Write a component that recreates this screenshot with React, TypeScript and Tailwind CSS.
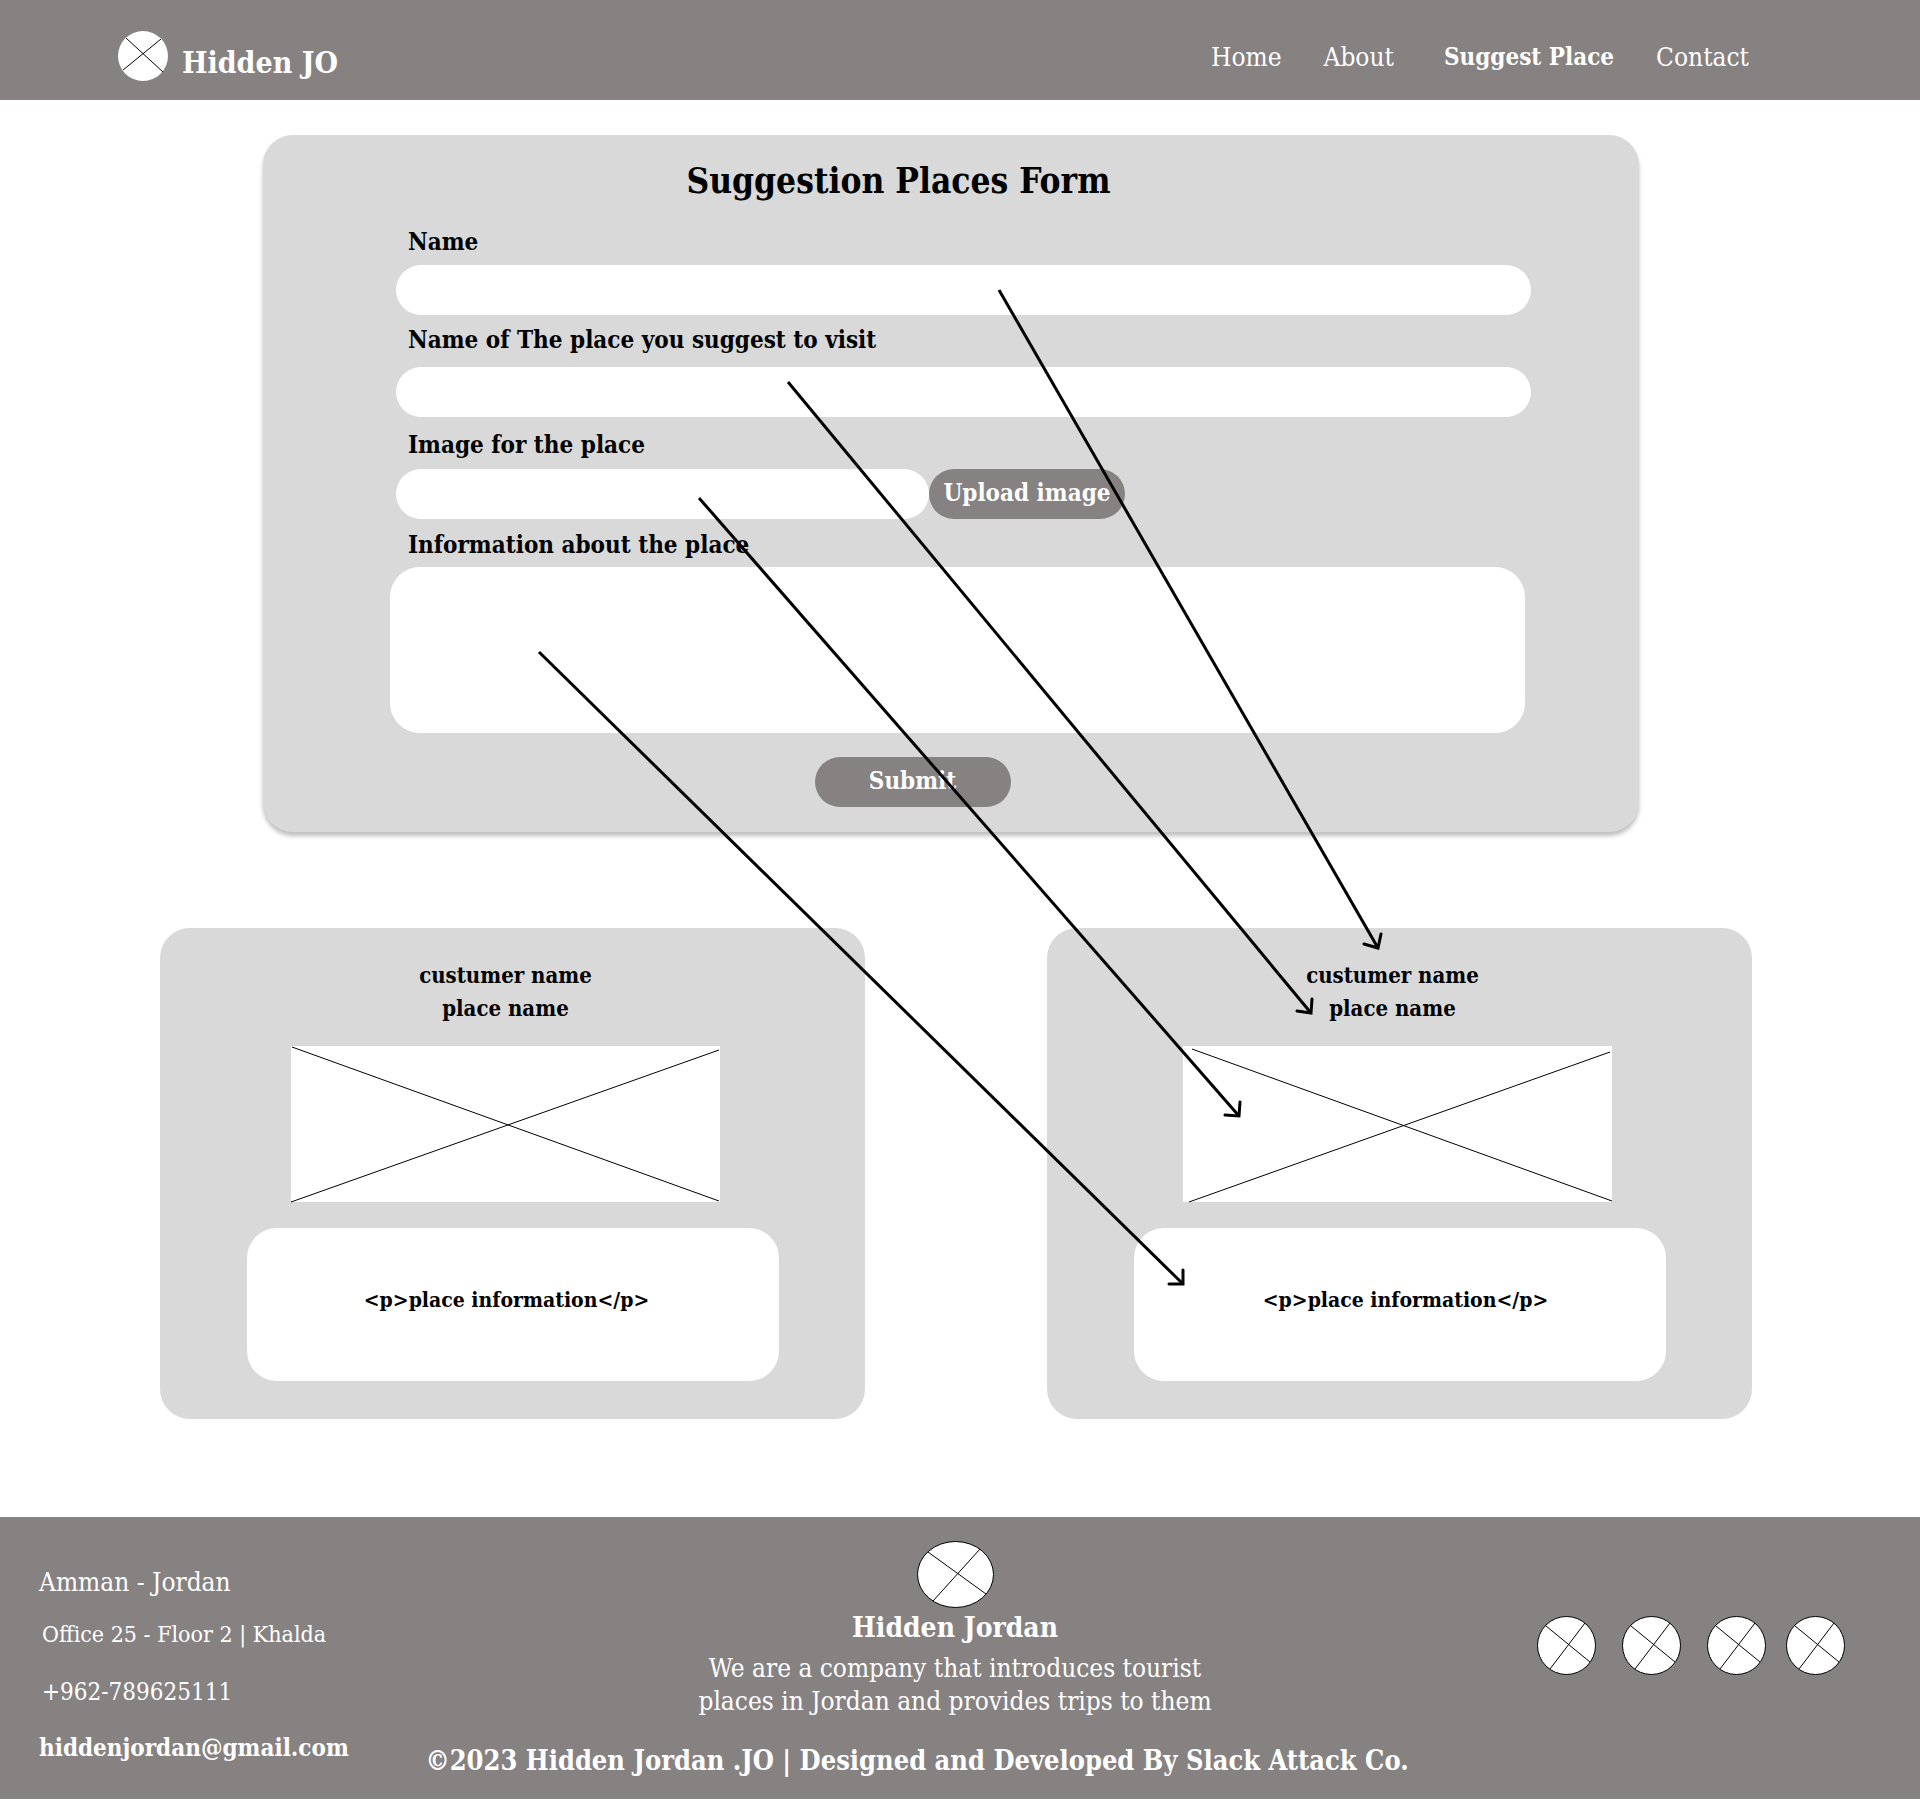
import React from "react";

type Line = [number, number, number, number];

function CrossedEllipse({ width, height, lines, outlined = true }: { width: number; height: number; lines: Line[]; outlined?: boolean }) {
  return (
    <svg width={width} height={height} viewBox={`0 0 ${width} ${height}`} className="block shrink-0" aria-hidden="true">
      <ellipse
        cx={width / 2}
        cy={height / 2}
        rx={outlined ? width / 2 - 0.5 : width / 2}
        ry={outlined ? height / 2 - 0.5 : height / 2}
        fill="#fff"
        stroke={outlined ? "#000" : "none"}
      />
      {lines.map(([x1, y1, x2, y2], i) => (
        <line key={i} x1={x1} y1={y1} x2={x2} y2={y2} stroke="#000" />
      ))}
    </svg>
  );
}

function SocialLink({ label }: { label: string }) {
  return (
    <a href="#" aria-label={label}>
      <CrossedEllipse width={59} height={59} lines={[[9, 10, 53, 46], [48, 7, 13, 53]]} />
    </a>
  );
}

function PlaceCard({ imageInset, textInset, lines }: { imageInset: string; textInset: string; lines: Line[] }) {
  return (
    <article className="min-w-0 flex-1 rounded-[30px] bg-[#d9d9d9] pt-[31px] pb-[38px]">
      <div className="pr-3.5 text-center text-[22px] leading-[33px] font-bold">
        <h2>custumer name</h2>
        <h3>place name</h3>
      </div>
      <div className={`mt-[21px] flex justify-center ${imageInset}`}>
        <svg viewBox="0 0 429 156" className="block h-[156px] w-[429px] overflow-visible bg-white" aria-hidden="true">
          {lines.map(([x1, y1, x2, y2], i) => (
            <line key={i} x1={x1} y1={y1} x2={x2} y2={y2} stroke="#000" />
          ))}
        </svg>
      </div>
      <div className="mx-auto mt-[26px] flex h-[153px] w-[532px] max-w-full items-center justify-center rounded-[30px] bg-white pb-2.5">
        <p className={`text-[21px] leading-8 font-bold ${textInset}`}>{"<p>place information</p>"}</p>
      </div>
    </article>
  );
}

const arrows: { shaft: Line; head: string }[] = [
  { shaft: [999, 190, 1378, 848], head: "M1364 844 L1378 848 L1381 834" },
  { shaft: [788, 282, 1311, 913], head: "M1297 911 L1311 913 L1312 899" },
  { shaft: [699, 398, 1239, 1016], head: "M1225 1015 L1239 1016 L1240 1002" },
  { shaft: [539, 552, 1183, 1184], head: "M1169 1184 L1183 1184 L1183 1170" },
];

export default function App() {
  const label = "block pl-3 text-[24px] leading-8 font-bold";
  const field = "block h-[50px] rounded-[25px] bg-white px-6 text-[22px] outline-none";
  const button = "h-[50px] w-[196px] shrink-0 rounded-[25px] bg-[#868282] pb-0.5 text-[24px] leading-8 font-bold whitespace-nowrap text-white";

  return (
    <div className="bg-white font-['DejaVu_Serif_Condensed','DejaVu_Serif',serif] text-black">
      <header className="flex h-[100px] items-center justify-between bg-[#868282] pr-[171px] pl-[118px] text-white">
        <a href="#" className="flex items-center gap-3.5 pt-3">
          <CrossedEllipse width={50} height={50} outlined={false} lines={[[8, 7, 45, 41], [43, 8, 5, 39]]} />
          <span className="pt-3.5 text-[30px] leading-8 font-bold">Hidden JO</span>
        </a>
        <nav className="flex gap-[50px] pt-3.5 text-[26px] leading-8">
          <div className="flex gap-[42px]">
            <a href="#">Home</a>
            <a href="#">About</a>
          </div>
          <div className="flex gap-[42px]">
            <a href="#" aria-current="page" className="text-[24px] font-bold">Suggest Place</a>
            <a href="#">Contact</a>
          </div>
        </nav>
      </header>

      <main className="relative pt-[35px] pr-[168px] pb-[98px] pl-40">
        <form
          onSubmit={(e) => e.preventDefault()}
          className="mr-[113px] ml-[103px] rounded-[30px] bg-[#d9d9d9] pt-[22px] pr-[108px] pb-[25px] pl-[127px] shadow-[0_4px_4px_rgba(0,0,0,0.25)]"
        >
          <h1 className="pr-[124px] text-center text-[35px] leading-[48px] font-bold">Suggestion Places Form</h1>
          <div className="mt-[21px] ml-1.5">
            <label htmlFor="name" className={label}>Name</label>
            <input id="name" type="text" className={`mt-[7px] w-full ${field}`} />
          </div>
          <div className="mt-[9px] ml-1.5">
            <label htmlFor="place" className={label}>Name of The place you suggest to visit</label>
            <input id="place" type="text" className={`mt-[11px] w-full ${field}`} />
          </div>
          <div className="mt-3 ml-1.5">
            <label htmlFor="image" className={label}>Image for the place</label>
            <div className="mt-2 flex">
              <input id="image" type="text" className={`w-[533px] min-w-0 ${field}`} />
              <button type="button" className={button}>Upload image</button>
            </div>
          </div>
          <div className="mt-2.5 mr-1.5">
            <label htmlFor="info" className="block pl-[18px] text-[24px] leading-8 font-bold">Information about the place</label>
            <textarea id="info" className="mt-1.5 block h-[166px] w-full resize-none rounded-[30px] bg-white p-6 text-[22px] outline-none" />
          </div>
          <div className="mt-6 flex justify-center pr-24">
            <button type="submit" className={button}>Submit</button>
          </div>
        </form>

        <section className="mt-24 flex gap-[182px]">
          <PlaceCard imageInset="pr-3.5" textInset="pr-3" lines={[[1, 1, 428, 155], [0, 156, 428, 4]]} />
          <PlaceCard imageInset="pr-1" textInset="pl-3" lines={[[9, 3, 429, 155], [6, 156, 427, 6]]} />
        </section>

        <svg
          viewBox="0 0 1920 1417"
          preserveAspectRatio="none"
          className="pointer-events-none absolute inset-0 h-full w-full"
          fill="none"
          stroke="#000"
          strokeWidth="3"
          aria-hidden="true"
        >
          {arrows.map(({ shaft, head }, i) => (
            <g key={i}>
              <line x1={shaft[0]} y1={shaft[1]} x2={shaft[2]} y2={shaft[3]} />
              <path d={head} strokeLinecap="round" />
            </g>
          ))}
        </svg>
      </main>

      <footer className="flex bg-[#868282] pt-6 pr-[75px] pb-[22px] pl-[39px] text-white">
        <address className="flex w-[388px] shrink-0 flex-col pt-[25px] text-[24px] leading-8 not-italic">
          <span className="text-[26px]">Amman - Jordan</span>
          <span className="mt-5 pl-[3px] text-[23px]">Office 25 - Floor 2 | Khalda</span>
          <a href="tel:+962789625111" className="mt-[26px] pl-[3px]">+962-789625111</a>
          <a href="mailto:hiddenjordan@gmail.com" className="mt-6 font-bold">hiddenjordan@gmail.com</a>
        </address>
        <div className="flex w-[980px] flex-col items-center">
          <div className="flex flex-col items-center pl-[76px] text-center">
            <CrossedEllipse width={77} height={67} lines={[[11, 11, 69, 53], [63, 8, 16, 60]]} />
            <h2 className="mt-1 text-[28px] leading-8 font-bold">Hidden Jordan</h2>
            <p className="mt-2 text-[26px] leading-[33px] whitespace-nowrap">
              We are a company that introduces tourist
              <br />
              places in Jordan and provides trips to them
            </p>
          </div>
          <p className="mt-[27px] text-[27px] leading-8 font-bold whitespace-nowrap">
            ©2023 Hidden Jordan .JO | Designed and Developed By Slack Attack Co.
          </p>
        </div>
        <div className="ml-auto flex gap-5 pt-[75px]">
          <div className="flex gap-[26px]">
            <SocialLink label="Facebook" />
            <SocialLink label="Instagram" />
            <SocialLink label="Twitter" />
          </div>
          <SocialLink label="YouTube" />
        </div>
      </footer>
    </div>
  );
}
